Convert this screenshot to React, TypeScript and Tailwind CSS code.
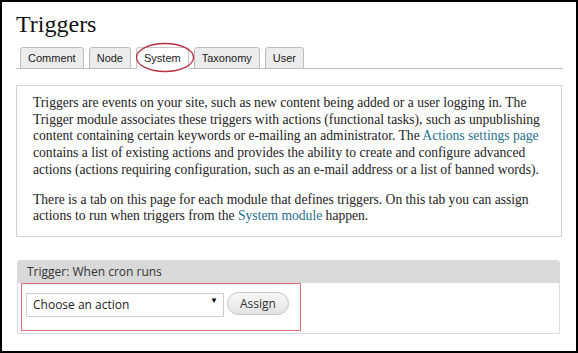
import React from "react";

const tabs = ["Comment", "Node", "System", "Taxonomy", "User"];

export default function App() {
  return (
    <div className="relative w-[578px] h-[353px] overflow-hidden border-2 border-black bg-white pl-[14px] pr-[13px]">
      <h1 className="pt-[7px] text-[24px] leading-[30px] text-[#111] [font-family:'Liberation_Serif',serif]">
        Triggers
      </h1>

      {/* tabs */}
      <ul className="mt-[8px] flex gap-[5px] border-b border-[#bdbdbd] pl-[4px] [font-family:'Liberation_Sans',Arial,sans-serif]">
        {tabs.map((t) => (
          <li
            key={t}
            className={`-mb-px h-[22px] rounded-t-[3px] border px-[7px] text-[11px] leading-[20px] text-[#222] ${
              t === "System"
                ? "border-[#c8c8c8] border-b-white bg-white"
                : "border-[#bdbdbd] bg-[#ececec]"
            }`}
          >
            {t}
          </li>
        ))}
      </ul>

      {/* description - lines broken as in the original page */}
      <div className="mt-[16px] mr-px whitespace-nowrap border border-[#d2d2d2] px-4 pt-[9px] pb-[11px] text-[13.6px] leading-[16.7px] text-[#222] [font-family:'Liberation_Serif',serif]">
        <p>
          Triggers are events on your site, such as new content being added or a user logging in. The
          <br />
          Trigger module associates these triggers with actions (functional tasks), such as unpublishing
          <br />
          content containing certain keywords or e-mailing an administrator. The{" "}
          <a className="text-[#1f6f8b]">Actions settings page</a>
          <br />
          contains a list of existing actions and provides the ability to create and configure advanced
          <br />
          actions (actions requiring configuration, such as an e-mail address or a list of banned words).
        </p>
        <p className="mt-[13px]">
          There is a tab on this page for each module that defines triggers. On this tab you can assign
          <br />
          actions to run when triggers from the <a className="text-[#1f6f8b]">System module</a> happen.
        </p>
      </div>

      {/* trigger panel */}
      <div className="mt-[23px] ml-px mr-[3px] rounded-t-[3px] border border-[#dcdcdc] [font-family:'Open_Sans',sans-serif]">
        <div className="h-[22px] bg-[#d9d9d9] pl-[9px] text-[12px] leading-[22px] text-[#333]">
          Trigger: When cron runs
        </div>
        <div className="flex items-center gap-[3px] px-[8px] pt-[8px] pb-[16px]">
          <div className="relative">
            <select className="h-[24px] w-[198px] appearance-none border border-[#cfcfcf] bg-white pl-[6px] text-[12px] text-[#222] outline-none">
              <option>Choose an action</option>
            </select>
            <span className="pointer-events-none absolute right-[6px] top-[5px] text-[8px] leading-none text-black">
              ▼
            </span>
          </div>
          <button className="h-[23px] w-[62px] rounded-[12px] border border-[#c6c6c6] bg-gradient-to-b from-[#f8f8f8] to-[#e3e3e3] text-[12px] text-[#333]">
            Assign
          </button>
        </div>
      </div>

      {/* annotations */}
      <svg className="pointer-events-none absolute left-[133px] top-[40px]" width="60" height="31" viewBox="0 0 60 31">
        <ellipse cx="30" cy="15.5" rx="28.5" ry="14" fill="none" stroke="#b83240" strokeWidth="1.3" />
      </svg>
      <div className="pointer-events-none absolute left-[19px] top-[281px] h-[48px] w-[280px] border-[1.5px] border-[#dd6f78]" />
    </div>
  );
}
